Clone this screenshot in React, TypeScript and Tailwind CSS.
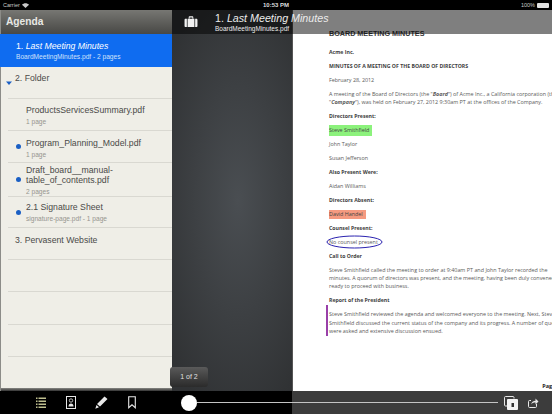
import React from "react";

interface AgendaRow {
  title: string[];
  sub?: string;
  level: 1 | 2;
  dot?: boolean;
  folder?: boolean;
  height: string;
  top: string;
}

const rows: AgendaRow[] = [
  { title: ["2. Folder"], level: 1, folder: true, height: "h-[32px]", top: "pt-[6px]" },
  { title: ["ProductsServicesSummary.pdf"], sub: "1 page", level: 2, height: "h-[32px]", top: "pt-[6px]" },
  { title: ["Program_Planning_Model.pdf"], sub: "1 page", level: 2, dot: true, height: "h-[32px]", top: "pt-[7px]" },
  { title: ["Draft_board__manual-", "table_of_contents.pdf"], sub: "2 pages", level: 2, dot: true, height: "h-[34px]", top: "pt-[2px]" },
  { title: ["2.1 Signature Sheet"], sub: "signature-page.pdf - 1 page", level: 2, dot: true, height: "h-[31px]", top: "pt-[5px]" },
  { title: ["3. Pervasent Website"], level: 1, height: "h-[32px]", top: "pt-[7px]" },
  { title: [], level: 1, height: "h-[32px]", top: "" },
  { title: [], level: 1, height: "h-[33px]", top: "" },
  { title: [], level: 1, height: "h-[32px]", top: "" },
];

const sans = "font-['Liberation_Sans',Arial,sans-serif]";

function AgendaList() {
  return (
    <div className="flex-1 overflow-hidden">
      {rows.map((row, i) => (
        <div key={i} className={`ml-[7px] flex border-b border-[#d9d8d1] ${row.height}`}>
          {row.level === 2 ? (
            <div className="flex w-[18px] shrink-0 items-center pl-[8px]">
              {row.dot && <span className="h-[5px] w-[5px] rounded-full bg-[#1a5fc4]" />}
            </div>
          ) : (
            <div className="flex w-[7px] shrink-0 items-center">
              {row.folder && (
                <svg className="-ml-[2px] shrink-0" width="6" height="4" viewBox="0 0 6 4">
                  <path d="M0 0.5h6L3 4z" fill="#1a5fc4" />
                </svg>
              )}
            </div>
          )}
          <div className={row.top}>
            {row.title.map((t) => (
              <div key={t} className="text-[8.7px] leading-[10px] whitespace-nowrap text-[#4a4a48]">
                {t}
              </div>
            ))}
            {row.sub && (
              <div className="mt-[3px] text-[6.6px] leading-[8px] whitespace-nowrap text-[#96958f]">{row.sub}</div>
            )}
          </div>
        </div>
      ))}
    </div>
  );
}

function Sidebar() {
  return (
    <div className={`flex w-[172px] shrink-0 flex-col border-l border-[#8c8c88] bg-[#efeee7] ${sans}`}>
      <div className="flex h-[24px] shrink-0 items-center bg-gradient-to-b from-[#777773] to-[#484845] pl-[5px] text-[10.2px] font-bold text-[#e8e8e4]">
        Agenda
      </div>
      <div className="-ml-px h-[33px] shrink-0 bg-[#0f6cf0] pt-[7px] pl-[16px] text-white">
        <div className="text-[8.7px] leading-[10px] whitespace-nowrap">
          1. <span className="italic">Last Meeting Minutes</span>
        </div>
        <div className="mt-[2px] text-[6.6px] leading-[8px] whitespace-nowrap text-[#cfe1fb]">
          BoardMeetingMinutes.pdf - 2 pages
        </div>
      </div>
      <AgendaList />
      <div className="h-[3px] shrink-0 bg-gradient-to-b from-[#8a8a86] to-[#333]" />
    </div>
  );
}

const para = "mb-[5.7px] text-[5.4px] leading-[8.3px] whitespace-nowrap text-[#5a5a5a]";
const head = "mb-[5.7px] leading-[8.3px] whitespace-nowrap font-bold text-[#404040]";

function Page() {
  return (
    <div className="relative flex-1 overflow-hidden border-l border-[#555] bg-white pt-[20px] pl-[36px] font-['Open_Sans',sans-serif] text-[5.2px]">
      <div className={`mb-[9.5px] text-[7.2px] leading-[8.3px] font-bold whitespace-nowrap text-[#3a3a3a] ${sans}`}>
        BOARD MEETING MINUTES
      </div>
      <div className={head}>Acme Inc.</div>
      <div className={head}>MINUTES OF A MEETING OF THE BOARD OF DIRECTORS</div>
      <div className={para}>February 28, 2012</div>
      <div className={para}>
        A meeting of the Board of Directors (the "<b className="italic">Board</b>") of Acme Inc., a California corporation (the
        <br />
        "<b className="italic">Company</b>"), was held on February 27, 2012 9:30am PT at the offices of the Company.
      </div>
      <div className={head}>Directors Present:</div>
      <div className={para}>
        <span className="-mt-[1px] -mb-[2px] inline-block bg-[#8cf27c] pt-[1px] pr-[3px] pb-[2px] text-[#444]">Steve Smithfield</span>
      </div>
      <div className={para}>John Taylor</div>
      <div className={para}>Susan Jefferson</div>
      <div className={head}>Also Present Were:</div>
      <div className={para}>Aidan Williams</div>
      <div className={head}>Directors Absent:</div>
      <div className={para}>
        <span className="-mb-[1px] inline-block bg-[#f59a80] pr-[3px] pb-[1px] text-[#444]">David Handel</span>
      </div>
      <div className={head}>Counsel Present:</div>
      <div className={`relative ${para}`}>
        No counsel present
        <svg className="absolute top-[-3px] left-[-3px]" width="57" height="14" viewBox="0 0 57 14" fill="none">
          <ellipse cx="28.5" cy="7" rx="27.5" ry="6" stroke="#2a22b0" strokeWidth="1" />
        </svg>
      </div>
      <div className={head}>Call to Order</div>
      <div className={para}>
        Steve Smithfield called the meeting to order at 9:40am PT and John Taylor recorded the
        <br />
        minutes. A quorum of directors was present, and the meeting, having been duly convened, was
        <br />
        ready to proceed with business.
      </div>
      <div className={head}>Report of the President</div>
      <div className={`relative ${para}`}>
        <span className="absolute top-[-5px] bottom-[-1px] left-[-3px] w-[1.5px] bg-[#9a3fa8]" />
        Steve Smithfield reviewed the agenda and welcomed everyone to the meeting. Next, Steve
        <br />
        Smithfield discussed the current status of the company and its progress. A number of questions
        <br />
        were asked and extensive discussion ensued.
      </div>
      <div className="absolute right-[-8px] bottom-[1px] text-[5.5px] font-bold text-[#222]">Page 1</div>
    </div>
  );
}

function TopBar() {
  return (
    <div className="absolute top-0 right-0 left-[172px] flex h-[24px] items-center bg-black/50">
      <svg className="ml-[12px] shrink-0" width="14" height="12" viewBox="0 0 14 13" fill="#f2f2f2">
        <path d="M4.500 3V1.600C4.500.8 5 .4 5.700.4h2.600c.7 0 1.200.4 1.200 1.200V3H8.500V1.500h-3V3z" />
        <path d="M1.200 3h1.300v9H1.200C.5 12 0 11.500 0 10.800V4.200C0 3.500.5 3 1.200 3zM3.300 3h7.400v9H3.300zM11.500 3h1.300c.7 0 1.200.5 1.200 1.200v6.600c0 .7-.5 1.200-1.200 1.200h-1.300z" />
      </svg>
      <div className={`ml-[17px] text-[#ececec] ${sans}`}>
        <div className="mt-[1px] text-[10.7px] leading-[13px] whitespace-nowrap">
          1. <span className="italic">Last Meeting Minutes</span>
        </div>
        <div className="text-[6.5px] leading-[8px] whitespace-nowrap">BoardMeetingMinutes.pdf</div>
      </div>
    </div>
  );
}

function ToolIcons() {
  return (
    <div className="flex w-[172px] shrink-0 items-center text-[#e8e8e8]">
      <svg className="ml-[36px]" width="10" height="12" viewBox="0 0 10 12" fill="#bfc08f">
        <path d="M0 .5h1.500V2H0zM2.500 .5H10V2H2.500zM0 3.500h1.500V5H0zM2.500 3.500H10V5H2.500zM0 6.500h1.500V8H0zM2.500 6.500H10V8H2.500zM0 9.500h1.500V11H0zM2.500 9.500H10V11H2.500z" />
      </svg>
      <svg className="ml-[20px]" width="10" height="13" viewBox="0 0 10 13" fill="none">
        <rect x="0.500" y="0.500" width="9" height="12" stroke="currentColor" />
        <circle cx="5" cy="4.500" r="1.700" stroke="currentColor" strokeWidth="0.800" />
        <path d="M2.500 10.500c0-2 1-3 2.500-3s2.500 1 2.500 3z" fill="currentColor" />
      </svg>
      <svg className="ml-[19px]" width="13" height="13" viewBox="0 0 13 13" fill="currentColor">
        <path d="M9.500.5l3 2.500-7.500 7.500-3-2.500zM1.500 9l2.500 2.200L.3 12.700z" />
      </svg>
      <svg className="ml-[20px]" width="8" height="13" viewBox="0 0 8 13" fill="none">
        <path d="M.7.700h6.600v11L4 8.800.7 11.700z" stroke="currentColor" strokeWidth="1.100" />
      </svg>
    </div>
  );
}

function BottomBar() {
  return (
    <div className="flex h-[23px] shrink-0 items-center bg-[linear-gradient(to_right,#000_292px,#3c3c3c_292px)]">
      <ToolIcons />
      <div className="ml-[9px] h-[16px] w-[16px] shrink-0 rounded-full bg-white" />
      <div className="h-px w-[301px] shrink-0 bg-[#c4c4c4]" />
      <svg className="ml-[6px] shrink-0" width="14" height="14" viewBox="0 0 14 14" fill="none">
        <path d="M10 2.500V1.500c0-.5-.3-1-1-1H1.500c-.6 0-1 .5-1 1V9c0 .7.5 1 1 1H3" stroke="#e8e8e8" />
        <rect x="3" y="3" width="11" height="11" rx="1" fill="#f4f4f4" />
        <rect x="7.500" y="7" width="2.500" height="4" fill="#333" />
      </svg>
      <svg className="ml-[10px] shrink-0" width="11" height="11" viewBox="0 0 11 11" fill="none" stroke="#e8e8e8">
        <path d="M8.500 7v2.500c0 .6-.4 1-1 1h-6c-.6 0-1-.4-1-1v-5c0-.6.400-1 1-1H3" />
        <path d="M3 7.500C3.500 5 5.300 3.700 7.500 3.700V1.500l3 3-3 3V5.500c-2 0-3.500.6-4.500 2z" fill="#e8e8e8" stroke="none" />
      </svg>
    </div>
  );
}

export default function App() {
  return (
    <div className={`flex h-[414px] w-[552px] flex-col overflow-hidden bg-black ${sans}`}>
      {/* status bar */}
      <div className="flex h-[10px] shrink-0 items-center justify-between pr-[3px] pl-[3px] text-[5.5px] text-[#c9c9c9]">
        <div className="flex w-[100px] items-center gap-[2px]">
          Carrier
          <svg width="7" height="5" viewBox="0 0 7 5" fill="#c9c9c9">
            <path d="M0 1.700C2-.3 5-.3 7 1.700L3.500 5z" />
          </svg>
        </div>
        <div className="text-[6px] font-bold text-[#dedede]">10:53 PM</div>
        <div className="flex w-[100px] items-center justify-end gap-[2px]">
          100%
          <span className="h-[5px] w-[12px] rounded-[1px] bg-[#e2e2e2]" />
        </div>
      </div>

      <div className="relative flex min-h-0 flex-1">
        <Sidebar />
        <div className="relative w-[120px] shrink-0 bg-[radial-gradient(ellipse_75%_60%_at_55%_50%,#4a4e52,#303234)]">
          <div className={`absolute bottom-[4px] -left-[2px] flex h-[20px] w-[38px] items-center justify-center rounded-[3px] bg-gradient-to-b from-[#5a5a5a] to-[#2b2b2b] text-[7px] text-[#e0e0e0] ${sans}`}>
            1 of 2
          </div>
        </div>
        <Page />
        <TopBar />
      </div>

      <BottomBar />
    </div>
  );
}
